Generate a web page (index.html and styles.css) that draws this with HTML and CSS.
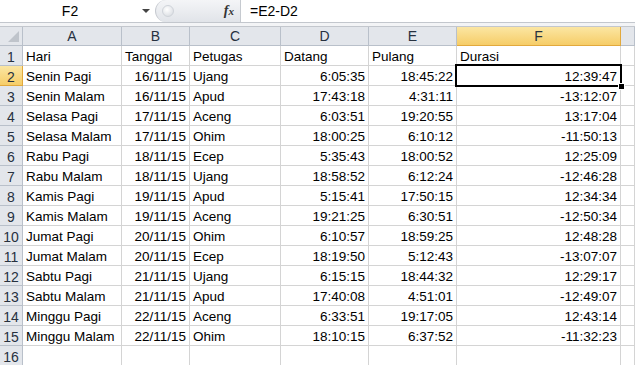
FILE: index.html
```html
<!DOCTYPE html>
<html lang="en">
<head>
  <meta charset="UTF-8" />
  <title>Durasi</title>
  <link rel="stylesheet" href="styles.css">
</head>
<body>
  <div class="formula-bar">
    <div class="name-box">
      <span class="name">F2</span>
      <span class="arrow"></span>
    </div>
    <div class="fx-area">
      <span class="knob"></span>
      <span class="fx">f<i>x</i></span>
    </div>
    <div class="formula">=E2-D2</div>
  </div>
  <div class="gap"></div>

  <div class="sheet">
    <div class="hd corner"><span class="tri"></span></div>
    <div class="hd">A</div>
    <div class="hd">B</div>
    <div class="hd">C</div>
    <div class="hd">D</div>
    <div class="hd">E</div>
    <div class="hd sel">F</div>
    <div class="hd"></div>

    <div class="rh">1</div>
    <div class="c">Hari</div>
    <div class="c">Tanggal</div>
    <div class="c">Petugas</div>
    <div class="c">Datang</div>
    <div class="c">Pulang</div>
    <div class="c">Durasi</div>
    <div class="c"></div>
  </div>

  <script>
    var rows = [
      ["Senin Pagi", "16/11/15", "Ujang", "6:05:35", "18:45:22", "12:39:47"],
      ["Senin Malam", "16/11/15", "Apud", "17:43:18", "4:31:11", "-13:12:07"],
      ["Selasa Pagi", "17/11/15", "Aceng", "6:03:51", "19:20:55", "13:17:04"],
      ["Selasa Malam", "17/11/15", "Ohim", "18:00:25", "6:10:12", "-11:50:13"],
      ["Rabu Pagi", "18/11/15", "Ecep", "5:35:43", "18:00:52", "12:25:09"],
      ["Rabu Malam", "18/11/15", "Ujang", "18:58:52", "6:12:24", "-12:46:28"],
      ["Kamis Pagi", "19/11/15", "Apud", "5:15:41", "17:50:15", "12:34:34"],
      ["Kamis Malam", "19/11/15", "Aceng", "19:21:25", "6:30:51", "-12:50:34"],
      ["Jumat Pagi", "20/11/15", "Ohim", "6:10:57", "18:59:25", "12:48:28"],
      ["Jumat Malam", "20/11/15", "Ecep", "18:19:50", "5:12:43", "-13:07:07"],
      ["Sabtu Pagi", "21/11/15", "Ujang", "6:15:15", "18:44:32", "12:29:17"],
      ["Sabtu Malam", "21/11/15", "Apud", "17:40:08", "4:51:01", "-12:49:07"],
      ["Minggu Pagi", "22/11/15", "Aceng", "6:33:51", "19:17:05", "12:43:14"],
      ["Minggu Malam", "22/11/15", "Ohim", "18:10:15", "6:37:52", "-11:32:23"],
      ["", "", "", "", "", ""]
    ];

    var sheet = document.querySelector(".sheet");

    rows.forEach(function (row, i) {
      var n = i + 2;
      var rh = document.createElement("div");
      rh.className = n === 2 ? "rh sel" : "rh";
      rh.textContent = n;
      sheet.appendChild(rh);

      row.forEach(function (val, j) {
        var cell = document.createElement("div");
        cell.className = j === 0 || j === 2 ? "c" : "c num";
        cell.textContent = val;
        if (n === 2 && j === 5) {
          cell.classList.add("active");
          var handle = document.createElement("span");
          handle.className = "handle";
          cell.appendChild(handle);
        }
        sheet.appendChild(cell);
      });

      sheet.appendChild(document.createElement("div")).className = "c";
    });
  </script>
</body>
</html>
```

FILE: styles.css
```css
:root {
  --grid: #d4d4d4;
  --head: #e3e6eb;
  --head-line: #b9c0ca;
  --sel-top: #fbe6a3;
  --sel-bottom: #f6cd68;
  --sel-line: #e2a93d;
}

* {
  margin: 0;
  padding: 0;
  box-sizing: border-box;
}

body {
  width: 635px;
  height: 365px;
  overflow: hidden;
  background: #ffffff;
  font-family: "Liberation Sans", Arial, sans-serif;
  font-size: 13.5px;
  color: #000;
}

/* formula bar */
.formula-bar {
  display: flex;
  height: 23px;
  border-bottom: 1px solid #c3c7cd;
  background: #fff;
}

.name-box {
  width: 155px;
  display: flex;
  align-items: center;
}

.name {
  width: 140px;
  text-align: center;
  font-size: 14px;
}

.arrow {
  margin-left: 2px;
  width: 0;
  height: 0;
  border-left: 4px solid transparent;
  border-right: 4px solid transparent;
  border-top: 4px solid #444;
}

.fx-area {
  width: 85px;
  display: flex;
  align-items: center;
  justify-content: space-between;
  padding: 0 6px 0 6px;
  background: linear-gradient(#f4f5f7, #e1e4e9);
  border-radius: 11px 0 0 11px;
  border-left: 1px solid #c6cad0;
}

.knob {
  width: 12px;
  height: 12px;
  border-radius: 50%;
  background: radial-gradient(circle at 40% 35%, #ffffff, #d3d7dd);
  border: 1px solid #cfd3d9;
}

.fx {
  font-family: "Liberation Serif", serif;
  font-style: italic;
  font-weight: bold;
  font-size: 14px;
  color: #333;
}

.fx i {
  font-size: 11px;
}

.formula {
  flex: 1;
  border-left: 1px solid #c6cad0;
  padding-left: 9px;
  line-height: 22px;
  font-size: 14px;
}

.gap {
  height: 4px;
  background: #f3f4f6;
  border-bottom: 1px solid #c3c7cd;
}

/* sheet grid */
.sheet {
  display: grid;
  grid-template-columns: 23px 99px 68px 91px 88px 88px 164px 1fr;
  grid-auto-rows: 20px;
  grid-template-rows: 19px;
}

.hd {
  background: var(--head);
  border-right: 1px solid var(--head-line);
  border-bottom: 1px solid var(--head-line);
  text-align: center;
  line-height: 18px;
  font-size: 14px;
  color: #27313f;
}

.corner {
  position: relative;
}

.tri {
  position: absolute;
  right: 3px;
  bottom: 3px;
  width: 0;
  height: 0;
  border-left: 11px solid transparent;
  border-bottom: 11px solid #bfc4cb;
}

.rh {
  background: var(--head);
  border-right: 1px solid var(--head-line);
  border-bottom: 1px solid var(--head-line);
  text-align: center;
  padding-top: 3px;
  line-height: 16px;
  font-size: 14px;
  color: #27313f;
}

.sel {
  background: linear-gradient(var(--sel-top), var(--sel-bottom));
  border-right-color: var(--sel-line);
  border-bottom-color: var(--sel-line);
}

.c {
  border-right: 1px solid var(--grid);
  border-bottom: 1px solid var(--grid);
  padding: 3px 3px 0;
  line-height: 16px;
  white-space: nowrap;
  overflow: hidden;
}

.num {
  text-align: right;
}

.active {
  position: relative;
  overflow: visible;
}

.active::after {
  content: "";
  position: absolute;
  left: -2px;
  top: -2px;
  right: -2px;
  bottom: -2px;
  border: 2px solid #000;
}

.handle {
  position: absolute;
  right: -5px;
  bottom: -5px;
  width: 7px;
  height: 7px;
  background: #000;
  border: 1px solid #fff;
  z-index: 1;
}
```
